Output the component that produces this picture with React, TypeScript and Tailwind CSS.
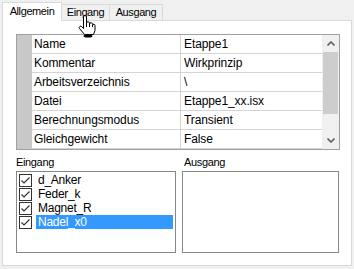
import React from 'react';

interface Prop {
  name: string;
  value: string;
}

const props: Prop[] = [
  { name: 'Name', value: 'Etappe1' },
  { name: 'Kommentar', value: 'Wirkprinzip' },
  { name: 'Arbeitsverzeichnis', value: '\\' },
  { name: 'Datei', value: 'Etappe1_xx.isx' },
  { name: 'Berechnungsmodus', value: 'Transient' },
  { name: 'Gleichgewicht', value: 'False' },
];

const inputs = [
  { label: 'd_Anker', selected: false },
  { label: 'Feder_k', selected: false },
  { label: 'Magnet_R', selected: false },
  { label: 'Nadel_x0', selected: true },
];

const CheckBox = (): React.ReactElement => (
  <svg width="13" height="13" viewBox="0 0 13 13" className="shrink-0 mt-[1px]">
    <rect x="0.5" y="0.5" width="12" height="12" fill="#fff" stroke="#333333" />
    <path d="M2.5 6.5 L5 9 L10.5 3.5" fill="none" stroke="#333333" strokeWidth="1.2" />
  </svg>
);

const Chevron = ({ up }: { up: boolean }): React.ReactElement => (
  <svg width="8" height="5" viewBox="0 0 8 5">
    <path
      d={up ? 'M0.5 4.5 L4 1 L7.5 4.5' : 'M0.5 0.5 L4 4 L7.5 0.5'}
      fill="none"
      stroke="#606060"
      strokeWidth="1.6"
    />
  </svg>
);

const HandCursor = (): React.ReactElement => (
  <svg width="18" height="23" viewBox="0 0 18 23" className="absolute left-[78px] top-[15px] z-20">
    <ellipse cx="10" cy="21" rx="4.5" ry="1.6" fill="#000" />
    <path
      d="M5.5 10 V2 A1.5 1.5 0 0 1 8.5 2 V8 A1.5 1.5 0 0 1 11.5 8.5 V9 A1.5 1.5 0 0 1 14.5 9.5 V10 A1.3 1.3 0 0 1 17 10.5 V15.5 L15.5 19.5 H6.5 L1.5 13.5 A1.4 1.4 0 0 1 3.8 11.8 L5.5 13.5 Z"
      fill="#fff"
      stroke="#000"
      strokeWidth="1"
      strokeLinejoin="round"
    />
    <path d="M8.5 8 V12 M11.5 9 V12 M14.5 10 V12" stroke="#000" strokeWidth="1" />
  </svg>
);

const App = (): React.ReactElement => {
  return (
    <div className="relative w-[354px] h-[269px] bg-[#f0f0f0] overflow-hidden font-['Liberation_Sans',Arial,sans-serif] text-black">
      {/* tabs */}
      <div className="flex items-end h-[21px] pl-[2px] text-[11px] tracking-[-0.4px] leading-none">
        <div className="relative z-10 w-[60px] h-[19px] bg-white border-l border-t border-r border-[#d9d9d9] flex items-center justify-center pb-[1px]">
          Allgemein
        </div>
        <div className="w-[48px] h-[16px] mb-[1px] border-t border-r border-[#d9d9d9] flex items-center justify-center">
          Eingang
        </div>
        <div className="w-[53px] h-[16px] mb-[1px] border-t border-r border-[#d9d9d9] flex items-center justify-center">
          Ausgang
        </div>
      </div>
      <HandCursor />

      {/* panel */}
      <div className="-mt-px mx-[2px] w-[350px] h-[246px] bg-white border border-[#d9d9d9] pt-[13px] pl-[13px]">
        {/* property grid */}
        <div className="w-[324px] h-[116px] border border-[#a0a0a0] flex text-[12px] tracking-[-0.1px]">
          <div className="w-[15px] bg-[#c8c8c8]" />
          <div className="w-[290px] flex flex-col">
            {props.map((p) => (
              <div key={p.name} className="flex h-[19px] border-b border-[#d4d4d4]">
                <div className="w-[149px] border-r border-[#d4d4d4] pl-[2px] flex items-center">
                  {p.name}
                </div>
                <div className="flex-1 pl-[3px] flex items-center">{p.value}</div>
              </div>
            ))}
          </div>
          <div className="w-[17px] bg-[#f0f0f0] flex flex-col">
            <div className="h-[17px] flex items-center justify-center">
              <Chevron up />
            </div>
            <div className="ml-[1px] w-[15px] h-[62px] bg-[#cdcdcd]" />
            <div className="flex-1" />
            <div className="h-[17px] flex items-center justify-center">
              <Chevron up={false} />
            </div>
          </div>
        </div>

        {/* lists */}
        <div className="flex gap-[6px] mt-[6px]">
          <div className="w-[160px]">
            <div className="h-[13px] mb-[2px] text-[11px] tracking-[-0.35px] leading-[13px]">Eingang</div>
            <div className="h-[82px] border border-[#828790] bg-white pt-[1px] px-[2px] text-[12px] tracking-[-0.25px]">
              {inputs.map((it) => (
                <div key={it.label} className="flex h-[14px] items-start">
                  <CheckBox />
                  <span
                    className={`ml-[4px] px-[2px] flex-1 h-[14px] leading-[14px] ${it.selected ? 'bg-[#3399ff] text-white' : ''}`}
                  >
                    {it.label}
                  </span>
                </div>
              ))}
            </div>
          </div>
          <div className="w-[157px]">
            <div className="h-[13px] mb-[2px] pl-[2px] text-[11px] tracking-[-0.35px] leading-[13px]">Ausgang</div>
            <div className="h-[82px] border border-[#828790] bg-white" />
          </div>
        </div>
      </div>
    </div>
  );
};

export default App;
